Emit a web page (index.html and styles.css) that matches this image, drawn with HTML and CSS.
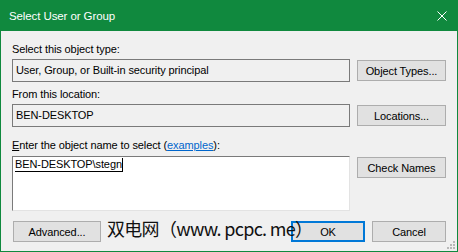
FILE: index.html
```html
<!DOCTYPE html>
<html lang="en">
<head>
    <meta charset="UTF-8">
    <title>Select User or Group</title>
    <link rel="stylesheet" href="styles.css">
</head>
<body>
    <div class="window">
        <div class="titlebar">
            <span class="title">Select User or Group</span>
            <svg class="close" width="10" height="10" viewBox="0 0 10 10">
                <path d="M0.5 0.5 L9.5 9.5 M9.5 0.5 L0.5 9.5" stroke="#fff" stroke-width="1" fill="none"/>
            </svg>
        </div>

        <div class="content">
            <div class="field">
                <div class="label">Select this object type:</div>
                <div class="row">
                    <div class="box readonly">User, Group, or Built-in security principal</div>
                    <button class="btn">Object Types...</button>
                </div>
            </div>

            <div class="field">
                <div class="label">From this location:</div>
                <div class="row">
                    <div class="box readonly">BEN-DESKTOP</div>
                    <button class="btn">Locations...</button>
                </div>
            </div>

            <div class="field names">
                <div class="label"><u>E</u>nter the object name to select (<a href="#" class="link">examples</a>):</div>
                <div class="row">
                    <div class="box editable">
                        <span class="resolved">BEN-DESKTOP\stegn</span><span class="caret"></span>
                    </div>
                    <button class="btn">Check Names</button>
                </div>
            </div>

            <div class="footer">
                <button class="btn">Advanced...</button>
                <div class="actions">
                    <button class="btn default">OK</button>
                    <button class="btn">Cancel</button>
                </div>
            </div>
        </div>

        <div class="watermark">双电网（www. pcpc. me）</div>

        <svg class="grip" width="10" height="10" viewBox="0 0 10 10">
            <rect x="7" y="1" width="2" height="2" fill="#b8b8b8"/>
            <rect x="4" y="4" width="2" height="2" fill="#b8b8b8"/>
            <rect x="7" y="4" width="2" height="2" fill="#b8b8b8"/>
            <rect x="1" y="7" width="2" height="2" fill="#b8b8b8"/>
            <rect x="4" y="7" width="2" height="2" fill="#b8b8b8"/>
            <rect x="7" y="7" width="2" height="2" fill="#b8b8b8"/>
        </svg>
    </div>
</body>
</html>
```

FILE: styles.css
```css
* {
    margin: 0;
    padding: 0;
    box-sizing: border-box;
}

body {
    font-family: 'Liberation Sans', Arial, sans-serif;
    font-size: 11px;
    letter-spacing: -0.1px;
    color: #000;
    background: #f0f0f0;
}

.window {
    position: relative;
    width: 458px;
    height: 252px;
    background: #f0f0f0;
    border: 1px solid #10893e;
    border-top: none;
}

.titlebar {
    height: 31px;
    margin: 0 -1px;
    background: #10893e;
    color: #fff;
    display: flex;
    align-items: center;
    justify-content: space-between;
    padding: 0 11px 0 9px;
}

.title {
    font-size: 11.5px;
}

.content {
    padding: 10px 11px 0 11px;
}

.field {
    margin-bottom: 4px;
}

.field.names {
    margin-top: 10px;
}

.label {
    line-height: 16px;
    margin-bottom: 2px;
}

.field.names .label {
    margin-bottom: 3px;
}

.link {
    color: #0066cc;
}

.row {
    display: flex;
    gap: 7px;
    align-items: flex-start;
}

.box {
    width: 338px;
    height: 23px;
    padding: 0 3px;
    line-height: 21px;
    white-space: nowrap;
}

.readonly {
    border: 1px solid #7a7a7a;
    background: #f0f0f0;
}

.editable {
    height: 55px;
    background: #fff;
    border: 1px solid #7a7a7a;
    border-right-color: #e3e3e3;
    border-bottom-color: #e3e3e3;
    padding: 1px 2px 0;
    line-height: 13px;
    display: flex;
    align-items: flex-start;
}

.resolved {
    border-bottom: 1px solid #000;
}

.caret {
    width: 1px;
    height: 14px;
    background: #000;
}

.btn {
    font-family: inherit;
    font-size: 11px;
    letter-spacing: -0.1px;
    color: #000;
    width: 89px;
    height: 21px;
    margin-top: 1px;
    background: #e1e1e1;
    border: 1px solid #adadad;
}

.footer {
    display: flex;
    justify-content: space-between;
    margin-top: 10px;
    padding-left: 1px;
}

.footer .btn {
    width: 88px;
    margin-top: 0;
}

.actions {
    display: flex;
    gap: 7px;
}

.actions .btn {
    width: 74px;
}

.btn.default {
    border: 2px solid #0078d7;
}

.watermark {
    position: absolute;
    left: 106px;
    top: 215px;
    font-family: 'Noto Sans CJK SC', sans-serif;
    font-size: 18px;
    letter-spacing: -0.7px;
    color: #111;
    white-space: nowrap;
}

.grip {
    position: absolute;
    right: 1px;
    bottom: 1px;
}
```
